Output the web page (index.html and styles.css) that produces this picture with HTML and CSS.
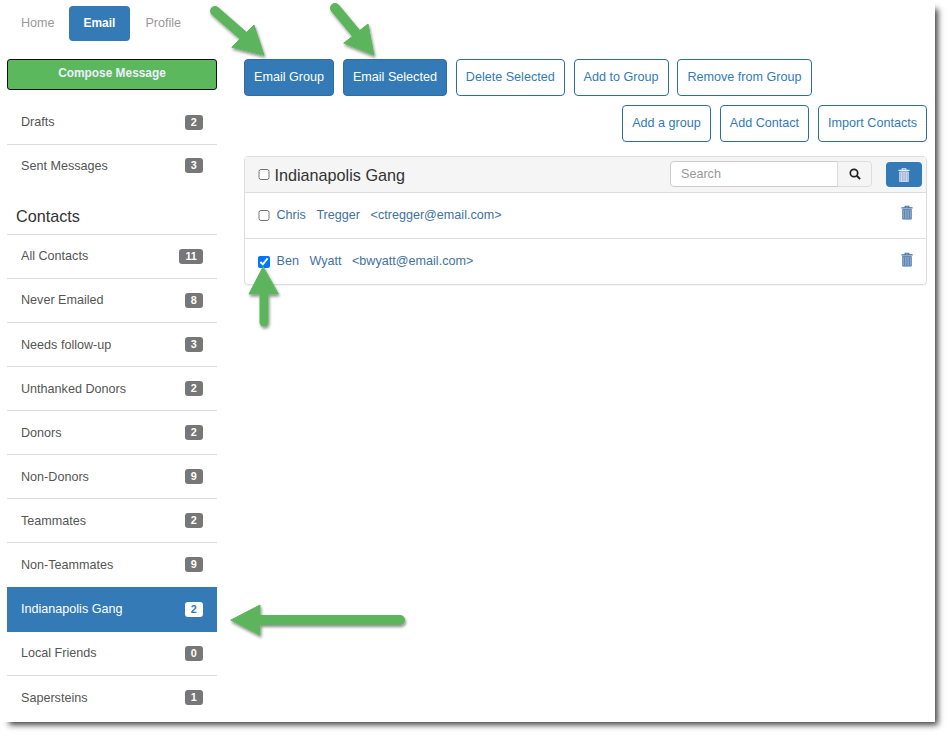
FILE: index.html
```html
<!DOCTYPE html>
<html lang="en">
<head>
<meta charset="utf-8">
<title>Email</title>
<link rel="stylesheet" href="styles.css">
</head>
<body>
<svg width="0" height="0" class="defs">
  <symbol id="trash" viewBox="0 0 12 14">
    <path d="M4.2 1.9V.7h3.6v1.2M.4 2.4h11.2" fill="none" stroke="currentColor" stroke-width="1.1"/>
    <path fill="currentColor" fill-opacity=".55" stroke="currentColor" stroke-width=".8" d="M1.7 3.9h8.6v9.7H1.7z"/>
    <path d="M3.7 4.6V13M6 4.6V13M8.3 4.6V13" stroke="currentColor" stroke-width=".8"/>
  </symbol>
</svg>
<div class="frame">
  <aside class="sidebar">
    <nav class="tabs">
      <a class="tab">Home</a>
      <a class="tab active">Email</a>
      <a class="tab">Profile</a>
    </nav>
    <button class="compose">Compose Message</button>
    <ul class="list first">
      <li class="row"><span>Drafts</span><b class="badge">2</b></li>
      <li class="row"><span>Sent Messages</span><b class="badge">3</b></li>
    </ul>
    <h2 class="heading">Contacts</h2>
    <ul class="list">
      <li class="row"><span>All Contacts</span><b class="badge">11</b></li>
      <li class="row"><span>Never Emailed</span><b class="badge">8</b></li>
      <li class="row"><span>Needs follow-up</span><b class="badge">3</b></li>
      <li class="row"><span>Unthanked Donors</span><b class="badge">2</b></li>
      <li class="row"><span>Donors</span><b class="badge">2</b></li>
      <li class="row"><span>Non-Donors</span><b class="badge">9</b></li>
      <li class="row"><span>Teammates</span><b class="badge">2</b></li>
      <li class="row"><span>Non-Teammates</span><b class="badge">9</b></li>
      <li class="row selected"><span>Indianapolis Gang</span><b class="badge">2</b></li>
      <li class="row"><span>Local Friends</span><b class="badge">0</b></li>
      <li class="row"><span>Sapersteins</span><b class="badge">1</b></li>
    </ul>
  </aside>
  <main class="main">
    <div class="actions">
      <button class="btn solid">Email Group</button>
      <button class="btn solid">Email Selected</button>
      <button class="btn">Delete Selected</button>
      <button class="btn">Add to Group</button>
      <button class="btn">Remove from Group</button>
    </div>
    <div class="actions right">
      <button class="btn">Add a group</button>
      <button class="btn">Add Contact</button>
      <button class="btn">Import Contacts</button>
    </div>
    <section class="panel">
      <header class="panel-head">
        <input type="checkbox" class="check">
        <span class="title">Indianapolis Gang</span>
        <div class="search">
          <input class="search-input" type="text" placeholder="Search">
          <button class="search-btn" aria-label="Search">
            <svg width="12" height="12" viewBox="0 0 12 12"><circle cx="5" cy="5" r="3.7" fill="none" stroke="#222" stroke-width="1.7"/><path d="M7.8 7.8l3.3 3.3" stroke="#222" stroke-width="2"/></svg>
          </button>
        </div>
        <button class="trash-btn" aria-label="Delete group"><svg class="trash-icon"><use href="#trash"/></svg></button>
      </header>
      <div class="contact">
        <input type="checkbox" class="check">
        <a class="person">Chris</a><a class="person">Tregger</a><a class="person">&lt;ctregger@email.com&gt;</a>
        <svg class="trash-icon link"><use href="#trash"/></svg>
      </div>
      <div class="contact">
        <input type="checkbox" class="check" checked>
        <a class="person">Ben</a><a class="person">Wyatt</a><a class="person">&lt;bwyatt@email.com&gt;</a>
        <svg class="trash-icon link"><use href="#trash"/></svg>
      </div>
    </section>
  </main>
  <svg class="arrows" width="950" height="737" viewBox="0 0 950 737">
    <defs><filter id="ds" x="-30%" y="-30%" width="160%" height="160%"><feDropShadow dx="1" dy="2" stdDeviation="1.6" flood-color="#000" flood-opacity=".45"/></filter></defs>
    <g filter="url(#ds)" fill="#5cb45c" stroke="#5cb45c" stroke-linecap="round">
      <path d="M215 11L246 38" fill="none" stroke-width="10"/>
      <path d="M264 55L254 25L232 47Z" stroke-width="1"/>
      <path d="M335 8L360 38" fill="none" stroke-width="10"/>
      <path d="M374 55L368 24L344 43Z" stroke-width="1"/>
      <path d="M264 290V322" fill="none" stroke-width="9"/>
      <path d="M263 267L249 294H278Z" stroke-width="1"/>
      <path d="M255 620H400" fill="none" stroke-width="10"/>
      <path d="M231 620L260 605V635Z" stroke-width="1"/>
    </g>
  </svg>
</div>
</body>
</html>
```
FILE: styles.css
```css
* { box-sizing: border-box; }
html, body { margin: 0; padding: 0; background: #fff; }
body { width: 950px; height: 737px; overflow: hidden; font-family: "Liberation Sans", Arial, sans-serif; font-size: 12.6px; color: #555; }
.defs { position: absolute; }
.frame { position: relative; display: flex; width: 935px; height: 722px; padding-left: 7px; background: #fff; box-shadow: 6px 6px 6px -3px #444; }
.sidebar { width: 210px; flex: none; }
.tabs { display: flex; margin-top: 6px; height: 35px; }
.tab { display: flex; align-items: center; padding: 0 14px 2px 14px; color: #999; border-radius: 4px; }
.tab.active { background: #337ab7; color: #fff; font-size: 11.9px; font-weight: bold; padding: 0 14.5px 2px 15px; margin-right: 0; }
.tab.active + .tab { padding-left: 15.6px; }
.compose { display: block; width: 210px; height: 31px; margin-top: 18px; padding: 0 0 4px; background: #5cb85c; color: #eef; border: 1px solid #111; border-radius: 3px; font: bold 11.9px "Liberation Sans", Arial, sans-serif; }
.list { list-style: none; margin: 0; padding: 0; }
.list.first { margin-top: 10.6px; }
.list.first .row:last-child { padding-bottom: 2px; }
.row { display: flex; align-items: center; justify-content: space-between; height: 44.1px; padding: 0 14px; border-bottom: 1px solid #ddd; }
.row:last-child { border-bottom: 0; }
.row.selected { margin-top: -1px; height: 45.1px; background: #337ab7; color: #fff; border-bottom: 0; }
.badge { min-width: 18px; height: 15px; padding: 0 6.2px; border-radius: 3px; background: #777; color: #fff; font-size: 10.8px; line-height: 15px; text-align: center; }
.selected .badge { background: #fff; color: #337ab7; }
.heading { height: 46px; margin: 0; padding: 18px 0 0 9px; border-bottom: 1px solid #ddd; font-size: 16.2px; font-weight: normal; line-height: 19px; color: #333; }
.main { flex: none; width: 683px; margin-left: 27px; padding-top: 59px; }
.actions { display: flex; gap: 8.9px; height: 37px; }
.actions.right { justify-content: flex-end; margin-top: 9px; gap: 9px; }
.btn { height: 37px; padding: 0 9px 2px; background: #fff; color: #337ab7; border: 1px solid #2e6da4; border-radius: 4px; font: 12.6px "Liberation Sans", Arial, sans-serif; white-space: nowrap; }
.btn.solid { background: #337ab7; color: #fff; }
.panel { margin-top: 14px; height: 129px; border: 1px solid #ddd; border-radius: 4px; box-shadow: 0 1px 1px rgba(0,0,0,.05); }
.panel-head { display: flex; align-items: center; height: 36px; padding: 0 4px 0 13px; background: #f5f5f5; border-bottom: 1px solid #ddd; }
.check { width: 11.5px; height: 11.5px; margin: 0 7px 0 0; flex: none; }
.panel-head .check { margin-right: 5px; }
.title { font-size: 16.2px; color: #333; padding-top: 2px; }
.search { display: flex; margin-left: auto; width: 202px; height: 26px; margin-top: -1px; }
.search-input { width: 168px; height: 26px; padding: 0 10px; background: #fff; border: 1px solid #ccc; border-radius: 4px 0 0 4px; font: 12.6px "Liberation Sans", Arial, sans-serif; outline: 0; }
.search-input::placeholder { color: #999; }
.search-btn { display: flex; align-items: center; justify-content: center; width: 35px; height: 26px; padding: 0; margin-left: -1px; background: #f5f5f5; border: 1px solid #ddd; border-radius: 0 4px 4px 0; flex: none; }
.trash-btn { display: flex; align-items: center; justify-content: center; width: 36px; height: 25px; margin-left: 14px; padding: 0; background: #337ab7; border: 0; border-radius: 4px; color: #efe8f7; }
.trash-icon { width: 12px; height: 14px; }
.contact { display: flex; align-items: center; height: 46px; padding: 0 13px; border-bottom: 1px solid #ddd; color: #337ab7; }
.contact:last-child { border-bottom: 0; height: 46px; }
.person { margin-right: 10.5px; padding-bottom: 2px; color: #43729f; }
.trash-icon.link { width: 12px; height: 15px; margin-left: auto; margin-top: -6px; margin-right: 0; color: #3f6fa3; }
.arrows { position: absolute; left: 0; top: 0; pointer-events: none; }
```
